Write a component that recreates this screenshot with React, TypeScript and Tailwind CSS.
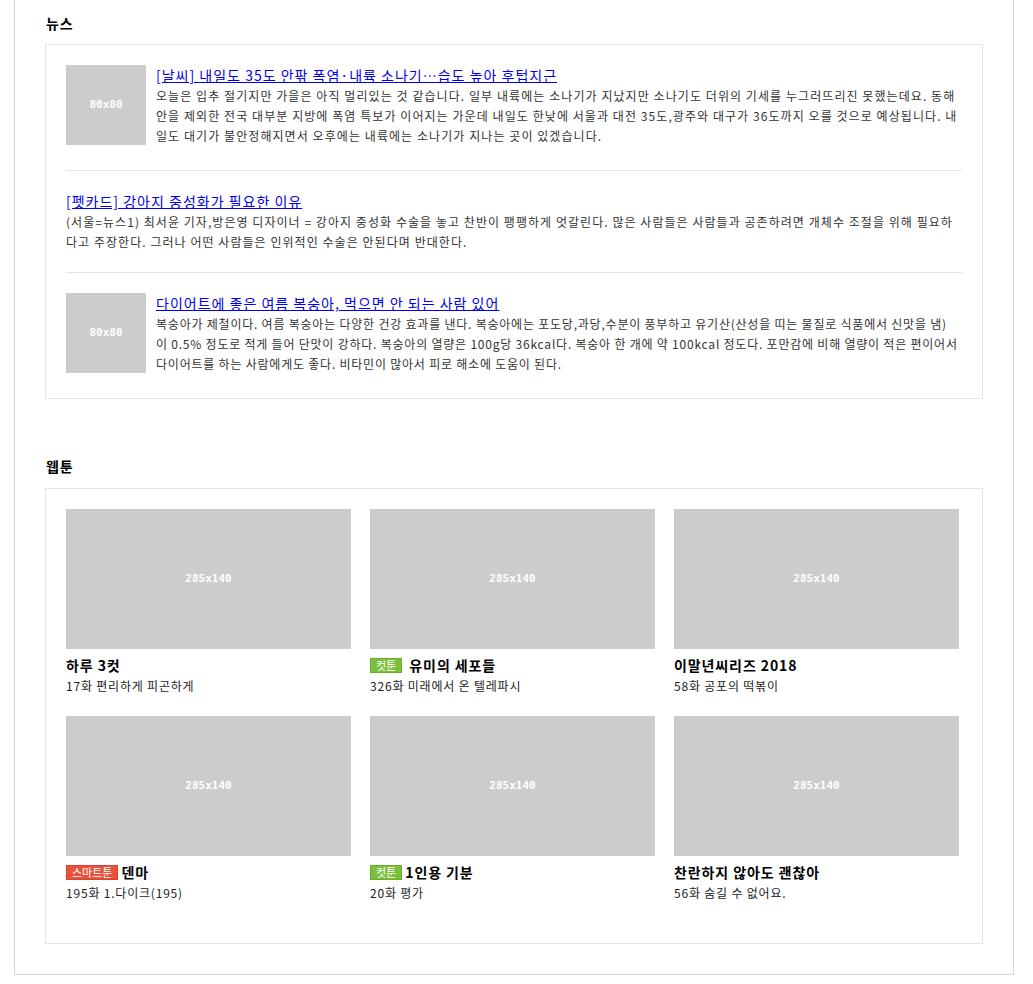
import React from 'react';

interface NewsItem {
  title: string;
  lines: string[];
  thumb: boolean;
  track: string;
}

interface Toon {
  title: string;
  sub: string;
  badge?: 'cut' | 'smart';
}

// body text is kept in the same line breaks as the original page
const news: NewsItem[] = [
  {
    title: '[날씨] 내일도 35도 안팎 폭염·내륙 소나기…습도 높아 후텁지근',
    lines: [
      '오늘은 입추 절기지만 가을은 아직 멀리있는 것 같습니다. 일부 내륙에는 소나기가 지났지만 소나기도 더위의 기세를 누그러뜨리진 못했는데요. 동해',
      '안을 제외한 전국 대부분 지방에 폭염 특보가 이어지는 가운데 내일도 한낮에 서울과 대전 35도,광주와 대구가 36도까지 오를 것으로 예상됩니다. 내',
      '일도 대기가 불안정해지면서 오후에는 내륙에는 소나기가 지나는 곳이 있겠습니다.',
    ],
    thumb: true,
    track: 'tracking-[1.07px]',
  },
  {
    title: '[펫카드] 강아지 중성화가 필요한 이유',
    lines: [
      '(서울=뉴스1) 최서윤 기자,방은영 디자이너 = 강아지 중성화 수술을 놓고 찬반이 팽팽하게 엇갈린다. 많은 사람들은 사람들과 공존하려면 개체수 조절을 위해 필요하',
      '다고 주장한다. 그러나 어떤 사람들은 인위적인 수술은 안된다며 반대한다.',
    ],
    thumb: false,
    track: 'tracking-[1.05px]',
  },
  {
    title: '다이어트에 좋은 여름 복숭아, 먹으면 안 되는 사람 있어',
    lines: [
      '복숭아가 제철이다. 여름 복숭아는 다양한 건강 효과를 낸다. 복숭아에는 포도당,과당,수분이 풍부하고 유기산(산성을 띠는 물질로 식품에서 신맛을 냄)',
      '이 0.5% 정도로 적게 들어 단맛이 강하다. 복숭아의 열량은 100g당 36kcal다. 복숭아 한 개에 약 100kcal 정도다. 포만감에 비해 열량이 적은 편이어서',
      '다이어트를 하는 사람에게도 좋다. 비타민이 많아서 피로 해소에 도움이 된다.',
    ],
    thumb: true,
    track: 'tracking-[0.78px]',
  },
];

const toons: Toon[] = [
  { title: '하루 3컷', sub: '17화 편리하게 피곤하게' },
  { title: ' 유미의 세포들', sub: '326화 미래에서 온 텔레파시', badge: 'cut' },
  { title: '이말년씨리즈 2018', sub: '58화 공포의 떡볶이' },
  { title: '덴마', sub: '195화 1.다이크(195)', badge: 'smart' },
  { title: '1인용 기분', sub: '20화 평가', badge: 'cut' },
  { title: '찬란하지 않아도 괜찮아', sub: '56화 숨길 수 없어요.' },
];

const Placeholder = ({ w, h }: { w: number; h: number }) => (
  <div
    className="flex items-center justify-center bg-[#cccccc] text-white text-[11px] font-bold tracking-normal font-['DejaVu_Sans_Mono',monospace]"
    style={{ width: w, height: h }}
  >
    {w}x{h}
  </div>
);

const Badge = ({ kind }: { kind: 'cut' | 'smart' }) =>
  kind === 'cut' ? (
    <span className="inline-flex items-center h-[15px] px-[5px] bg-[#7cbf3c] border border-[#6aae2c] text-white text-[11px] font-normal leading-none tracking-normal">
      컷툰
    </span>
  ) : (
    <span className="inline-flex items-center h-[15px] px-[5px] bg-[#e8513a] border border-[#d8432c] text-white text-[11px] font-normal leading-none tracking-normal">
      스마트툰
    </span>
  );

export default function App() {
  return (
    <div className="bg-white min-h-screen font-['Noto_Sans_CJK_KR','Noto_Sans',sans-serif] text-[#222] tracking-[0.8px]">
      <div className="ml-[14px] w-[1000px] border border-t-0 border-[#d5d5d5] px-[30px] pt-[13px] pb-[30px]">
        <section>
          <h2 className="text-[14px] leading-[20px] font-bold text-black px-[1px] mb-[11px]">뉴스</h2>
          <div className="border border-[#e3e3e3] px-[20px]">
            {news.map((n, i) => (
              <div
                key={i}
                className={`flex gap-[10px] py-[20px] ${i < news.length - 1 ? 'border-b border-[#e3e3e3]' : ''}`}
              >
                {n.thumb && (
                  <div className="shrink-0 h-[85px]">
                    <Placeholder w={80} h={80} />
                  </div>
                )}
                <div className="min-w-0 flex-1">
                  <a href="#" className="block text-[14px] leading-[21px] tracking-[1px] text-[#0000ee] underline">
                    {n.title}
                  </a>
                  <p className={`text-[12px] leading-[20px] text-[#333] ${n.track}`}>
                    {n.lines.map((l, j) => (
                      <span key={j} className="block whitespace-nowrap">
                        {l}
                      </span>
                    ))}
                  </p>
                </div>
              </div>
            ))}
          </div>
        </section>

        <section className="mt-[57px]">
          <h2 className="text-[14px] leading-[20px] font-bold text-black px-[1px] mb-[12px]">웹툰</h2>
          <div className="border border-[#e3e3e3] px-[20px] pt-[20px] pb-[20px]">
            <div className="flex flex-wrap gap-x-[19px]">
              {toons.map((t, i) => (
                <div key={i} className="w-[285px] pb-[20px]">
                  <Placeholder w={285} h={140} />
                  <div className="mt-[5px] flex items-center h-[22px] text-[14px] font-bold tracking-[0.9px] text-black whitespace-pre">
                    {t.badge && <Badge kind={t.badge} />}
                    <span className={t.badge ? 'ml-[3px]' : ''}>{t.title}</span>
                  </div>
                  <div className="text-[12px] leading-[20px] text-[#222]">{t.sub}</div>
                </div>
              ))}
            </div>
          </div>
        </section>
      </div>
    </div>
  );
}
